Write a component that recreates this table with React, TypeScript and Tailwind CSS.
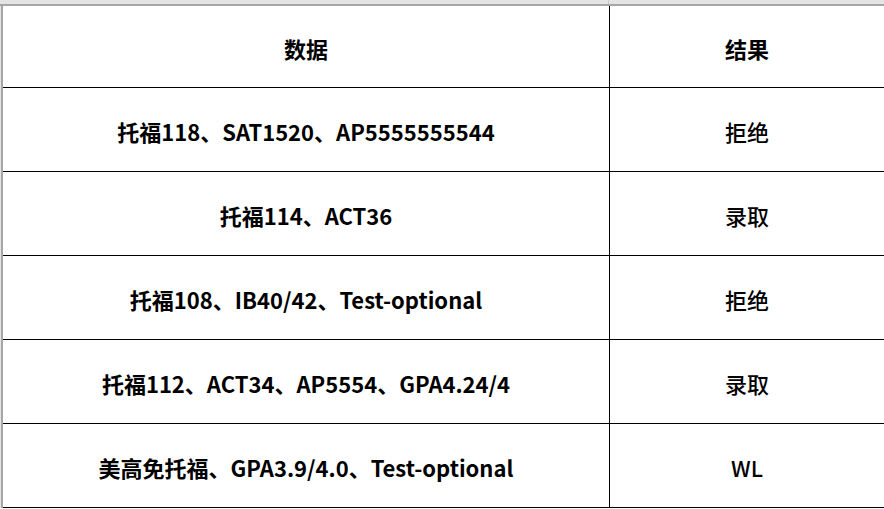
import React from 'react';

type Row = { data: string; result: string };

const rows: Row[] = [
    { data: '托福118、SAT1520、AP5555555544', result: '拒绝' },
    { data: '托福114、ACT36', result: '录取' },
    { data: '托福108、IB40/42、Test-optional', result: '拒绝' },
    { data: '托福112、ACT34、AP5554、GPA4.24/4', result: '录取' },
    { data: '美高免托福、GPA3.9/4.0、Test-optional', result: 'WL' },
];

const font = { fontFamily: '"Noto Sans CJK SC", "Liberation Sans", sans-serif' };

export default function App() {
    return (
        <div
            className="w-[884px] h-[509px] overflow-hidden bg-white text-black"
            style={font}
        >
            {/* spreadsheet column header strip */}
            <div className="flex h-[4px] bg-[#e4e4e4]">
                <div className="w-[609px] border-r border-[#c8c8c8]" />
                <div className="flex-1" />
            </div>
            <div className="h-[2px] bg-[#a6a6a6]" />

            <div className="flex">
                <div className="w-[1px] bg-[#e4e4e4]" />
                <div className="w-[2px] bg-[#a6a6a6]" />
                <div className="flex-1">
                    {/* header */}
                    <div className="grid grid-cols-[606px_1px_1fr] h-[82px] border-b border-black">
                        <div className="flex items-center justify-center pt-[3px] text-[22px] font-bold">数据</div>
                        <div className="bg-black" />
                        <div className="flex items-center justify-center pt-[3px] text-[22px] font-bold">结果</div>
                    </div>
                    {rows.map((r) => (
                        <div
                            key={r.data}
                            className="grid grid-cols-[606px_1px_1fr] h-[84px] border-b border-black"
                        >
                            <div className="flex items-center justify-center pt-[3px] text-[22px] font-bold">
                                {r.data}
                            </div>
                            <div className="bg-black" />
                            <div className="flex items-center justify-center pt-[3px] text-[22px] font-medium">
                                {r.result}
                            </div>
                        </div>
                    ))}
                </div>
            </div>
        </div>
    );
}
